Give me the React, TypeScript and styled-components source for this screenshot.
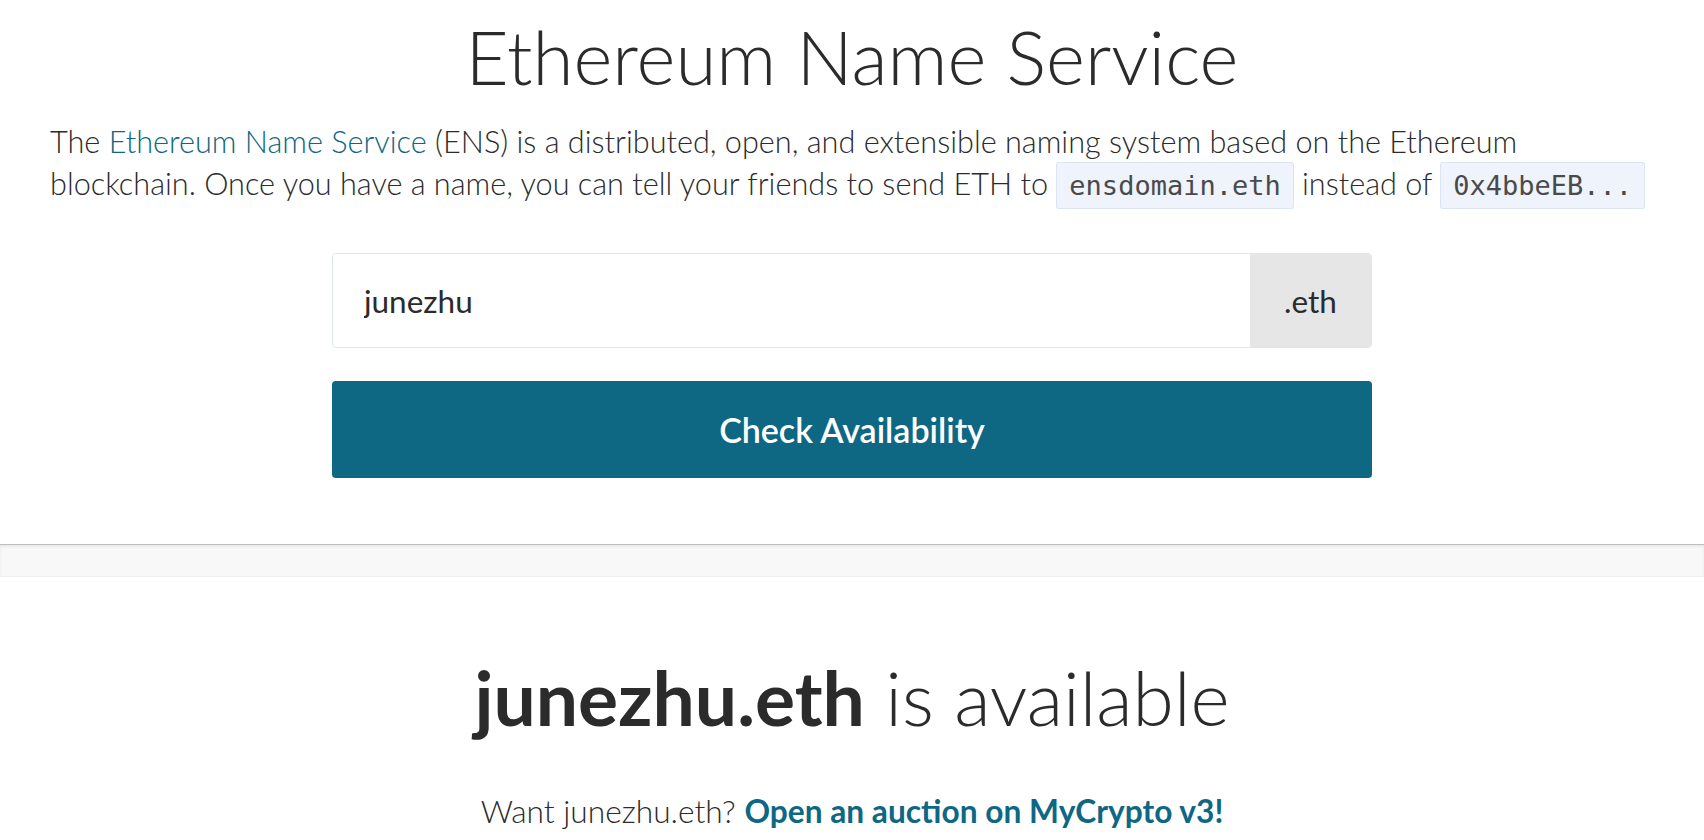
import React from "react";
import styled, { createGlobalStyle } from "styled-components";

const Global = createGlobalStyle`
  html, body { margin: 0; padding: 0; background: #fff; }
  body { font-family: Lato, "Open Sans", sans-serif; color: #2b2b2b; -webkit-font-smoothing: antialiased; }
  * { box-sizing: border-box; }
`;

const Page = styled.div`
  width: 100%;
  display: flex;
  flex-direction: column;
`;

const Hero = styled.section`
  padding: 12px 50px 66px;
  display: flex;
  flex-direction: column;
  align-items: center;
`;

const Title = styled.h1`
  margin: 0;
  font-weight: 300;
  font-size: 74.5px;
  line-height: 1.2;
  color: #2b2b2b;
  text-align: center;
`;

const Lead = styled.p`
  margin: 20px 0 0;
  width: 100%;
  font-weight: 300;
  font-size: 30.66px;
  line-height: 42px;
  color: #2b2b2b;
`;

const Link = styled.a<{ $bold?: boolean }>`
  color: #0e6783;
  text-decoration: none;
  font-weight: ${(p) => (p.$bold ? 700 : "inherit")};
`;

const Code = styled.code`
  font-family: "DejaVu Sans Mono", "Liberation Mono", monospace;
  font-size: 27px;
  font-weight: 400;
  background: #eef3fc;
  border: 1px solid #dbe4f1;
  border-radius: 3px;
  padding: 7px 12px;
  color: #4a4a4a;
`;

const Form = styled.form`
  width: 1040px;
  margin-top: 46px;
  display: flex;
  flex-direction: column;
  gap: 33px;
`;

const InputGroup = styled.div`
  display: flex;
  height: 95px;
  border: 1px solid #dde5ee;
  border-radius: 4px;
  overflow: hidden;
`;

const NameInput = styled.input`
  flex: 1;
  min-width: 0;
  border: none;
  outline: none;
  padding: 0 31px;
  font-family: Lato, sans-serif;
  font-size: 31.5px;
  color: #2b2b2b;
  background: #fff;
`;

const Addon = styled.div`
  width: 121px;
  display: flex;
  align-items: center;
  justify-content: center;
  background: #e6e6e6;
  font-size: 31.5px;
  color: #2b2b2b;
`;

const Button = styled.button`
  height: 97px;
  border: none;
  border-radius: 4px;
  background: #0e6783;
  color: #fff;
  font-family: Lato, sans-serif;
  font-weight: 600;
  font-size: 34px;
  cursor: pointer;
`;

const Band = styled.div`
  height: 33px;
  background: #f8f8f8;
  border-top: 1px solid #bdbdbd;
  border-bottom: 1px solid #eeeeee;
  box-shadow: inset 0 2px 3px rgba(0, 0, 0, 0.06);
`;

const Result = styled.section`
  padding: 75px 50px 40px;
  display: flex;
  flex-direction: column;
  align-items: center;
`;

const ResultTitle = styled.h2`
  margin: 0;
  font-size: 75px;
  font-weight: 300;
  line-height: 1.2;
  color: #2b2b2b;
  strong { font-weight: 700; }
`;

const ResultText = styled.p`
  margin: 48px 0 0;
  font-size: 31.7px;
  font-weight: 300;
  line-height: 42px;
  color: #2b2b2b;
`;

export default function App() {
  return (
    <Page>
      <Global />
      <Hero>
        <Title>Ethereum Name Service</Title>
        <Lead>
          The <Link href="#">Ethereum Name Service</Link> (ENS) is a distributed, open, and extensible naming system
          based on the Ethereum blockchain. Once you have a name, you can tell your friends to send ETH to{" "}
          <Code>ensdomain.eth</Code> instead of <Code>0x4bbeEB...</Code>
        </Lead>
        <Form onSubmit={(e) => e.preventDefault()}>
          <InputGroup>
            <NameInput defaultValue="junezhu" />
            <Addon>.eth</Addon>
          </InputGroup>
          <Button type="submit">Check Availability</Button>
        </Form>
      </Hero>
      <Band />
      <Result>
        <ResultTitle>
          <strong>junezhu.eth</strong> is available
        </ResultTitle>
        <ResultText>
          Want junezhu.eth? <Link href="#" $bold>Open an auction on MyCrypto v3!</Link>
        </ResultText>
      </Result>
    </Page>
  );
}
